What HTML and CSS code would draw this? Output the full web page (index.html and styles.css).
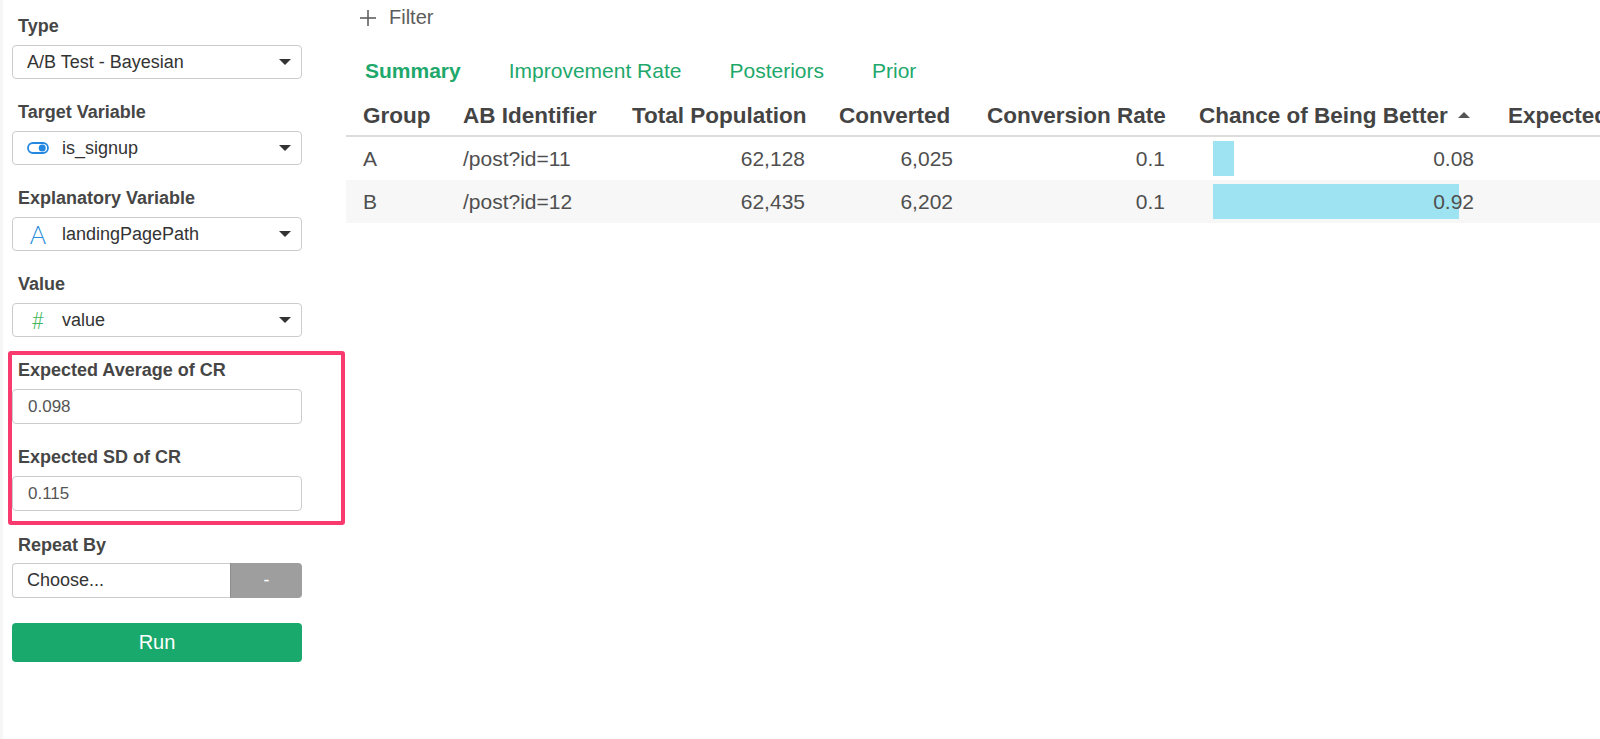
FILE: index.html
```html
<!DOCTYPE html>
<html lang="en">
<head>
<meta charset="utf-8">
<title>A/B Test - Bayesian</title>
<link rel="stylesheet" href="styles.css">
</head>
<body>
<div class="app">
  <aside class="sidebar">
    <div class="field">
      <div class="label">Type</div>
      <div class="select"><span class="sel-text">A/B Test - Bayesian</span><span class="caret"></span></div>
    </div>
    <div class="field">
      <div class="label">Target Variable</div>
      <div class="select">
        <span class="icon"><svg width="22" height="12" viewBox="0 0 22 12"><rect x="1" y="1" width="20" height="10" rx="5" fill="none" stroke="#2488e0" stroke-width="1.8"/><circle cx="15.2" cy="6" r="3.5" fill="#2488e0"/></svg></span>
        <span class="sel-text">is_signup</span><span class="caret"></span>
      </div>
    </div>
    <div class="field">
      <div class="label">Explanatory Variable</div>
      <div class="select">
        <span class="icon glyph-a">A</span>
        <span class="sel-text">landingPagePath</span><span class="caret"></span>
      </div>
    </div>
    <div class="field field-last">
      <div class="label">Value</div>
      <div class="select">
        <span class="icon glyph-hash">#</span>
        <span class="sel-text">value</span><span class="caret"></span>
      </div>
    </div>
    <div class="highlight">
      <div class="field">
        <div class="label">Expected Average of CR</div>
        <div class="input">0.098</div>
      </div>
      <div class="field field-last">
        <div class="label">Expected SD of CR</div>
        <div class="input">0.115</div>
      </div>
    </div>
    <div class="field repeat">
      <div class="label">Repeat By</div>
      <div class="split">
        <div class="split-main">Choose...</div>
        <div class="split-btn">-</div>
      </div>
    </div>
    <button class="run">Run</button>
  </aside>
  <main class="main">
    <div class="filter">
      <svg width="18" height="18" viewBox="0 0 18 18"><path d="M9 1v16M1 9h16" stroke="#555" stroke-width="1.5" fill="none"/></svg>
      <span>Filter</span>
    </div>
    <nav class="tabs">
      <span class="tab active">Summary</span>
      <span class="tab">Improvement Rate</span>
      <span class="tab">Posteriors</span>
      <span class="tab">Prior</span>
    </nav>
    <table class="grid">
      <colgroup>
        <col class="c1"><col class="c2"><col class="c3"><col class="c4"><col class="c5"><col class="c6"><col class="c7">
      </colgroup>
      <thead>
        <tr>
          <th>Group</th>
          <th>AB Identifier</th>
          <th>Total Population</th>
          <th>Converted</th>
          <th>Conversion Rate</th>
          <th>Chance of Being Better<span class="sort"></span></th>
          <th>Expected Loss</th>
        </tr>
      </thead>
      <tbody>
        <tr>
          <td>A</td>
          <td>/post?id=11</td>
          <td class="num">62,128</td>
          <td class="num">6,025</td>
          <td class="num">0.1</td>
          <td class="num barcell"><span class="bar" style="width:21px"></span><span class="val">0.08</span></td>
          <td></td>
        </tr>
        <tr class="alt">
          <td>B</td>
          <td>/post?id=12</td>
          <td class="num">62,435</td>
          <td class="num">6,202</td>
          <td class="num">0.1</td>
          <td class="num barcell"><span class="bar" style="width:246px"></span><span class="val">0.92</span></td>
          <td></td>
        </tr>
      </tbody>
    </table>
  </main>
</div>
</body>
</html>
```
FILE: styles.css
```css
html, body {
  margin: 0;
  padding: 0;
  background: #ffffff;
  font-family: "Liberation Sans", Arial, sans-serif;
  overflow: hidden;
}

.app {
  display: flex;
  width: 1600px;
  height: 739px;
  overflow: hidden;
}

.sidebar {
  flex: none;
  width: 346px;
  box-sizing: border-box;
  padding: 16px 44px 0 9px;
  border-left: 3px solid #f6f6f6;
  background: #fff;
}

.field {
  margin-bottom: 23px;
}

.field-last {
  margin-bottom: 14px;
}

.label {
  font-size: 18px;
  line-height: 21px;
  font-weight: bold;
  color: #464646;
  padding-left: 6px;
  margin-bottom: 8px;
  white-space: nowrap;
}

.select {
  height: 34px;
  box-sizing: border-box;
  border: 1px solid #cccccc;
  border-radius: 4px;
  display: flex;
  align-items: center;
  padding: 0 10px 0 14px;
  background: #fff;
}

.sel-text {
  flex: 1;
  font-size: 18px;
  color: #333;
  white-space: nowrap;
}

.icon {
  width: 22px;
  margin-right: 13px;
  display: flex;
  align-items: center;
  justify-content: center;
}

.glyph-a {
  font-family: "Lato", "Open Sans", sans-serif;
  font-weight: 300;
  font-size: 25px;
  line-height: 20px;
  color: #2b8ddc;
}

.glyph-hash {
  font-family: "Lato", "Open Sans", sans-serif;
  font-weight: 300;
  font-size: 23px;
  line-height: 20px;
  color: #45b760;
}

.caret {
  width: 0;
  height: 0;
  border-left: 6px solid transparent;
  border-right: 6px solid transparent;
  border-top: 6px solid #333;
}

.highlight {
  border: 4px solid #f93a6f;
  border-radius: 3px;
  margin: 0 -43px 0 -4px;
  padding: 5px 39px 10px 0;
}

.highlight .field-last {
  margin-bottom: 0;
}

.input {
  height: 35px;
  box-sizing: border-box;
  border: 1px solid #cccccc;
  border-radius: 4px;
  padding-left: 15px;
  display: flex;
  align-items: center;
  font-size: 17px;
  color: #555;
}

.repeat {
  margin-top: 10px;
  margin-bottom: 25px;
}

.repeat .label {
  margin-bottom: 7px;
}

.split {
  display: flex;
  height: 35px;
}

.split-main {
  width: 218px;
  box-sizing: border-box;
  border: 1px solid #cccccc;
  border-right: none;
  border-radius: 4px 0 0 4px;
  padding-left: 14px;
  display: flex;
  align-items: center;
  font-size: 18px;
  color: #333;
}

.split-btn {
  flex: 1;
  background: #9e9e9e;
  border-left: 1px solid #8e8e8e;
  border-radius: 0 4px 4px 0;
  color: #fff;
  font-size: 18px;
  display: flex;
  align-items: center;
  justify-content: center;
}

.run {
  display: block;
  width: 290px;
  height: 39px;
  border: none;
  border-radius: 4px;
  background: #1aa96c;
  color: #fff;
  font-family: "Liberation Sans", Arial, sans-serif;
  font-size: 20px;
  padding: 0;
}

.main {
  flex: 1;
  min-width: 0;
  overflow: hidden;
}

.filter {
  display: flex;
  align-items: center;
  height: 23px;
  padding: 6px 0 0 13px;
  font-size: 20px;
  color: #5c5c5c;
}

.filter svg {
  margin-right: 12px;
}

.tabs {
  display: flex;
  gap: 48px;
  margin-top: 30px;
  padding-left: 19px;
  font-size: 21px;
  line-height: 24px;
}

.tab {
  color: #1ea86b;
  white-space: nowrap;
}

.tab.active {
  font-weight: bold;
}

.grid {
  margin-top: 8px;
  table-layout: fixed;
  width: 1545px;
  border-collapse: separate;
  border-spacing: 0;
}

.c1 { width: 100px; }
.c2 { width: 169px; }
.c3 { width: 207px; }
.c4 { width: 148px; }
.c5 { width: 212px; }
.c6 { width: 309px; }
.c7 { width: 400px; }

.grid th {
  text-align: left;
  font-size: 22.5px;
  line-height: 25px;
  font-weight: bold;
  color: #444;
  padding: 12px 17px 7px 17px;
  border-bottom: 2px solid #dcdcdc;
  white-space: nowrap;
  overflow: hidden;
}

.sort {
  display: inline-block;
  width: 0;
  height: 0;
  border-left: 6px solid transparent;
  border-right: 6px solid transparent;
  border-bottom: 6px solid #555;
  margin-left: 10px;
  vertical-align: 5px;
}

.grid td {
  height: 43px;
  padding: 0 17px;
  font-size: 21px;
  line-height: 24px;
  color: #4f4f4f;
  vertical-align: middle;
  white-space: nowrap;
}

.grid td.num {
  text-align: right;
}

.grid tr.alt td {
  background: #f7f7f7;
}

.barcell {
  position: relative;
}

.bar {
  position: absolute;
  left: 31px;
  top: 4px;
  bottom: 4px;
  background: #9ee3f2;
}

.val {
  position: relative;
}
```
